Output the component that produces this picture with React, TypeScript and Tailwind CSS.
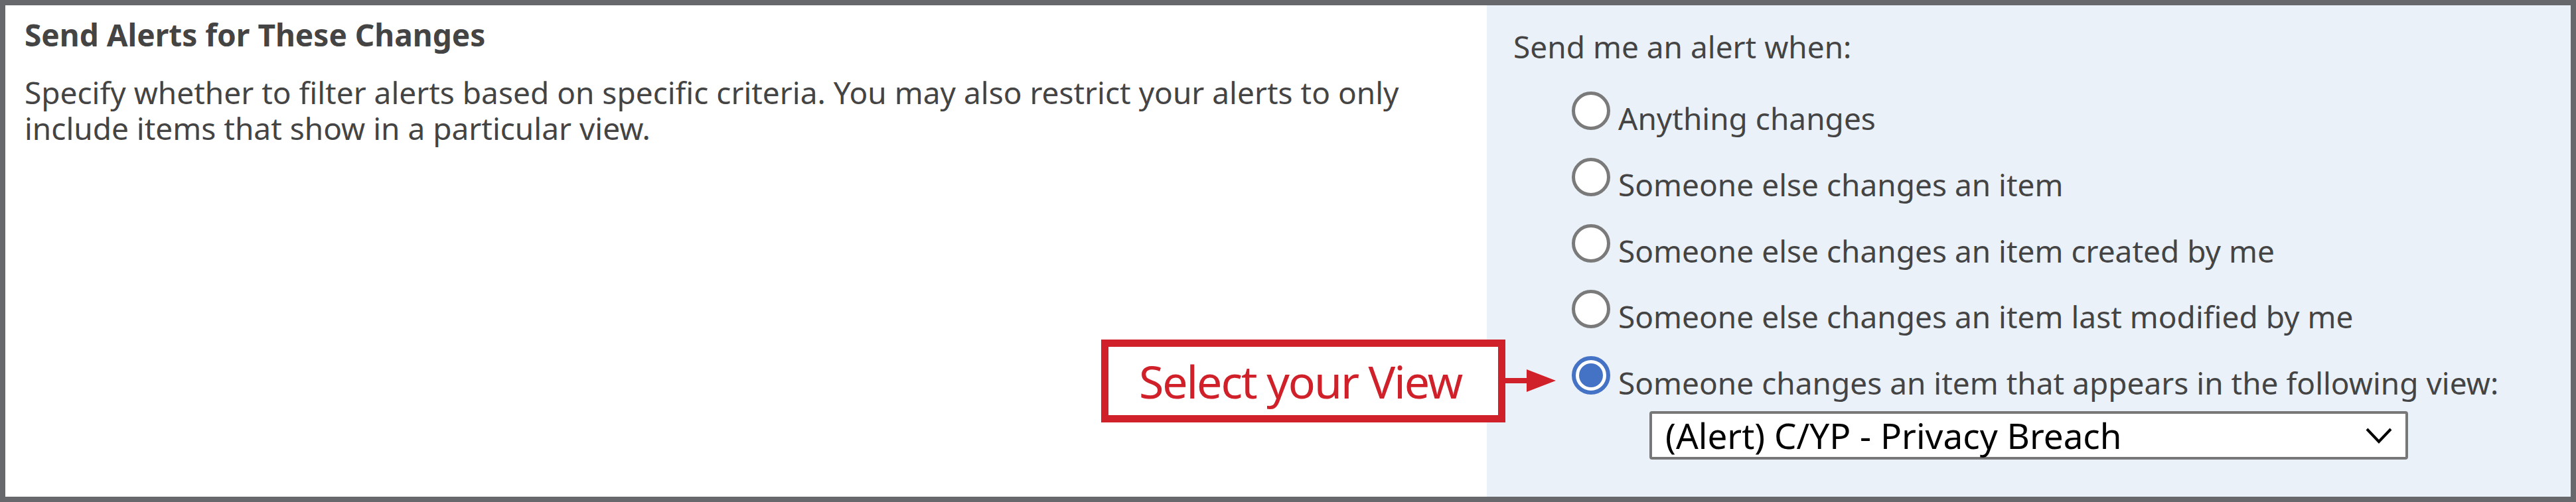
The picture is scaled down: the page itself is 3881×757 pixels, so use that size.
import React from 'react';

const options = [
  'Anything changes',
  'Someone else changes an item',
  'Someone else changes an item created by me',
  'Someone else changes an item last modified by me',
  'Someone changes an item that appears in the following view:',
];

const Radio: React.FC<{ checked?: boolean }> = ({ checked }) => {
  if (checked) {
    return (
      <span className="flex items-center justify-center w-[58px] h-[58px] shrink-0 rounded-full border-[6px] border-[#4472c4] bg-white">
        <span className="w-[36px] h-[36px] rounded-full bg-[#4472c4]" />
      </span>
    );
  }
  return <span className="block w-[58px] h-[58px] shrink-0 rounded-full border-[5px] border-[#7a7a7a] bg-white" />;
};

export default function App() {
  return (
    <div className="relative w-[3881px] h-[757px] bg-[#67686c] p-2 font-['Noto_Sans',sans-serif] text-[#444]">
      <div className="flex h-full">
        {/* left description column */}
        <div className="w-[2232px] bg-white pl-[29px] pt-[17px]">
          <h3 className="text-[46px] leading-[54px] font-bold">Send Alerts for These Changes</h3>
          <p className="mt-[33px] text-[46px] leading-[54px]">
            Specify whether to filter alerts based on specific criteria. You may also restrict your alerts to only
            <br />
            include items that show in a particular view.
          </p>
        </div>

        {/* right options column */}
        <div className="flex-1 bg-[#eaf1f9] pl-[40px] pt-[35px] text-[46px] leading-[54px]">
          <div>Send me an alert when:</div>
          <div className="mt-[41px] ml-[88px] flex flex-col gap-[32.75px]">
            {options.map((label, i) => (
              <div key={label} className="flex items-start gap-[12px]">
                <Radio checked={i === options.length - 1} />
                <span className="mt-[13px] whitespace-nowrap">{label}</span>
              </div>
            ))}
          </div>
          <div className="mt-[16px] ml-[205px] w-[1143px] h-[73px] flex items-center justify-between pl-[20px] pr-[20px] bg-white border-4 border-[#777] rounded-[4px] text-black">
            <span className="text-[53px] leading-[60px] whitespace-nowrap">(Alert) C/YP - Privacy Breach</span>
            <svg width="40" height="24" viewBox="0 0 40 24" fill="none">
              <polyline points="2,2 20,21 38,2" stroke="#000" strokeWidth="4" />
            </svg>
          </div>
        </div>
      </div>

      {/* callout */}
      <div className="absolute left-[1659px] top-[512px] w-[609px] h-[125px] border-[11px] border-[#d0202a] bg-white flex items-center pl-[46px]">
        <span className="text-[68px] leading-none tracking-[-0.03em] text-[#d0202a] whitespace-nowrap">Select your View</span>
      </div>
      <svg className="absolute left-[2268px] top-[557px]" width="76" height="34" viewBox="0 0 76 34">
        <line x1="0" y1="17" x2="34" y2="17" stroke="#d0202a" strokeWidth="8" />
        <polygon points="32,0 76,17 32,34" fill="#d0202a" />
      </svg>
    </div>
  );
}
